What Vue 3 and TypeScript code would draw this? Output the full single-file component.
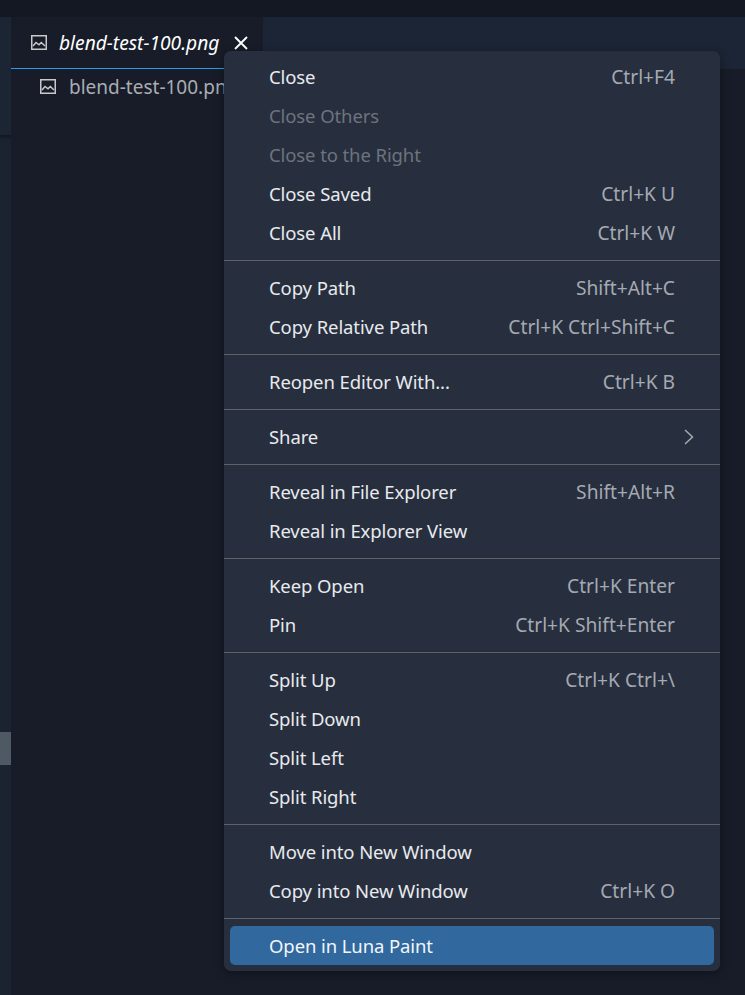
<template>
  <div class="window">
    <div class="titlebar"></div>
    <div class="body">
      <aside class="sidebar">
        <div class="side-top"></div>
        <div class="side-shadow"></div>
        <div class="side-rest">
          <div class="side-thumb"></div>
        </div>
      </aside>
      <main class="editor">
        <div class="tabbar">
          <div class="tab">
            <svg class="file-icon" viewBox="0 0 16 16" fill="none" stroke="currentColor" stroke-width="1.5">
              <rect x="0.75" y="0.75" width="14.5" height="13.5" />
              <path d="M2 11 5 7.5 8 9.8 10.3 7.5 14 11" />
            </svg>
            <span class="tab-name">blend-test-100.png</span>
            <svg class="tab-close" viewBox="0 0 14 14" fill="none" stroke="currentColor" stroke-width="1.9">
              <path d="M1 1 13 13M13 1 1 13" />
            </svg>
          </div>
        </div>
        <div class="crumbs">
          <svg class="file-icon" viewBox="0 0 16 16" fill="none" stroke="currentColor" stroke-width="1.5">
            <rect x="0.75" y="0.75" width="14.5" height="13.5" />
            <path d="M2 11 5 7.5 8 9.8 10.3 7.5 14 11" />
          </svg>
          <span>blend-test-100.png</span>
        </div>
      </main>
    </div>

    <div class="menu">
      <template v-for="(group, g) in groups" :key="g">
        <div v-if="g > 0" class="sep"><div class="sep-line"></div></div>
        <div
          v-for="item in group"
          :key="item.label"
          class="item"
          :class="{ disabled: item.disabled, active: item.active }"
        >
          <span class="label">{{ item.label }}</span>
          <span v-if="item.keys" class="keys">{{ item.keys }}</span>
          <svg v-if="item.sub" class="chevron" viewBox="0 0 10 16" fill="none" stroke="currentColor" stroke-width="1.5">
            <path d="M1 1 8.5 8 1 15" />
          </svg>
        </div>
      </template>
    </div>
  </div>
</template>

<script setup lang="ts">
interface MenuItem {
  label: string;
  keys?: string;
  disabled?: boolean;
  sub?: boolean;
  active?: boolean;
}

const groups: MenuItem[][] = [
  [
    { label: "Close", keys: "Ctrl+F4" },
    { label: "Close Others", disabled: true },
    { label: "Close to the Right", disabled: true },
    { label: "Close Saved", keys: "Ctrl+K U" },
    { label: "Close All", keys: "Ctrl+K W" },
  ],
  [
    { label: "Copy Path", keys: "Shift+Alt+C" },
    { label: "Copy Relative Path", keys: "Ctrl+K Ctrl+Shift+C" },
  ],
  [{ label: "Reopen Editor With...", keys: "Ctrl+K B" }],
  [{ label: "Share", sub: true }],
  [
    { label: "Reveal in File Explorer", keys: "Shift+Alt+R" },
    { label: "Reveal in Explorer View" },
  ],
  [
    { label: "Keep Open", keys: "Ctrl+K Enter" },
    { label: "Pin", keys: "Ctrl+K Shift+Enter" },
  ],
  [
    { label: "Split Up", keys: "Ctrl+K Ctrl+\\" },
    { label: "Split Down" },
    { label: "Split Left" },
    { label: "Split Right" },
  ],
  [
    { label: "Move into New Window" },
    { label: "Copy into New Window", keys: "Ctrl+K O" },
  ],
  [{ label: "Open in Luna Paint", active: true }],
];
</script>

<style>
html,
body {
  margin: 0;
  background: #171c28;
}
</style>

<style scoped>
.window {
  position: relative;
  width: 745px;
  height: 995px;
  overflow: hidden;
  background: #171c28;
  font-family: "Noto Sans", "Open Sans", sans-serif;
}
.titlebar {
  height: 17px;
  background: #141822;
}
.body {
  display: flex;
  height: 978px;
}
.sidebar {
  width: 11px;
  flex-shrink: 0;
  display: flex;
  flex-direction: column;
}
.side-top {
  height: 118px;
  background: #1c2533;
}
.side-shadow {
  height: 5px;
  background: linear-gradient(#121620, #1b2330);
}
.side-rest {
  flex: 1;
  padding-top: 592px;
  background: #1b2330;
}
.side-thumb {
  height: 33px;
  background: #4f5963;
}
.editor {
  flex: 1;
  min-width: 0;
}
.tabbar {
  height: 52px;
  background: #1c2535;
}
.tab {
  width: 252px;
  height: 52px;
  box-sizing: border-box;
  display: flex;
  align-items: center;
  padding-left: 20px;
  background: #171c28;
  border-bottom: 1px solid #2c9bec;
  color: #fff;
}
.file-icon {
  width: 16px;
  height: 16px;
  flex-shrink: 0;
  color: #c9c9c9;
}
.tab-name {
  margin-left: 12px;
  font-size: 19.2px;
  font-style: italic;
  white-space: nowrap;
}
.tab-close {
  width: 14px;
  height: 14px;
  margin-left: 15px;
  color: #fff;
}
.crumbs {
  display: flex;
  align-items: center;
  gap: 13px;
  height: 36px;
  padding-left: 29px;
  font-size: 19px;
  color: #a9adb3;
  white-space: nowrap;
}
.menu {
  position: absolute;
  left: 224px;
  top: 51px;
  width: 496px;
  box-sizing: border-box;
  padding: 6px;
  background: #272f3f;
  border-radius: 7px;
  box-shadow: 0 2px 10px rgba(0, 0, 0, 0.35);
  font-size: 19px;
  color: #e8eaed;
}
.item {
  display: flex;
  align-items: center;
  justify-content: space-between;
  height: 39px;
  padding: 0 39px;
  border-radius: 5px;
  white-space: nowrap;
}
.label {
  font-size: 18.5px;
  letter-spacing: -0.1px;
}
.keys {
  font-size: 19.2px;
  color: #a5a9b1;
}
.disabled {
  color: #6e737e;
}
.active {
  background: #31689e;
  color: #f2f6fa;
}
.chevron {
  width: 10px;
  height: 16px;
  margin-right: -19px;
  color: #a5a9b1;
}
.sep {
  height: 16px;
  margin: 0 -6px;
  padding-top: 8px;
  box-sizing: border-box;
}
.sep-line {
  height: 1px;
  background: #5e6268;
}
</style>
